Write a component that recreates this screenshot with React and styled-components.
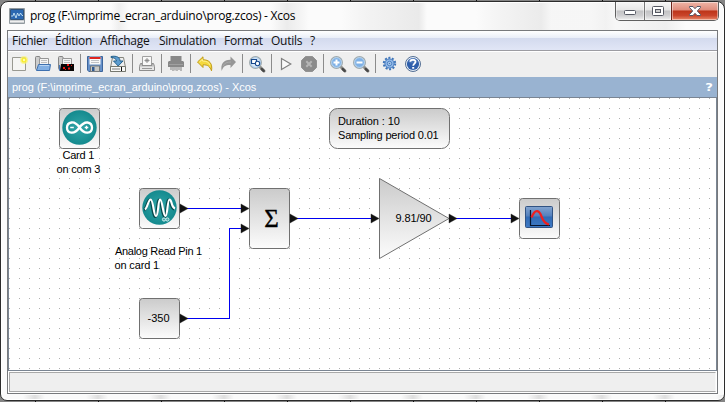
import React from "react";
import styled, { createGlobalStyle } from "styled-components";

const GlobalStyle = createGlobalStyle`
  * { box-sizing: border-box; }
  body { margin: 0; overflow: hidden; background: #77787a; }
`;

const Desktop = styled.div`
  width: 725px;
  height: 402px;
  padding: 1px 0 0;
  background:
    repeating-linear-gradient(90deg, transparent 0 35px, #111 35px 36px, transparent 36px 63px),
    #858585;
`;

const Window = styled.div`
  width: 725px;
  height: 400px;
  display: flex;
  flex-direction: column;
  padding: 0 7px 7px 7px;
  border: 1px solid #2c2c2c;
  border-radius: 8px 8px 7px 7px;
  background:
    linear-gradient(90deg, transparent 0 110px, #e9e9e9aa 118px, transparent 128px 270px, #e4e4e4aa 286px, #f1f1f1aa 300px, transparent 308px 340px, #efefefaa 365px, #e1e1e1aa 418px, transparent 426px 475px, #efefef88 495px, #e3e3e3aa 540px, #f2f2f288 550px 590px, #e9e9e988 605px, #f4f4f488 615px, #e9e9e9aa 665px, transparent 685px) 0 0 / 100% 30px no-repeat,
    repeating-linear-gradient(90deg, #fafafa 0 22px, #dedede 34px, #fafafa 44px 63px) 0 393px / 100% 5px no-repeat,
    #fbfbfb;
  box-shadow: inset 0 0 0 1px #fff;
`;

const TitleBar = styled.div`
  height: 28px;
  flex: none;
  display: flex;
  align-items: flex-start;
  padding-left: 1px;
`;

const AppIcon = styled.svg`
  width: 16px;
  height: 16px;
  margin-top: 6px;
`;

const TitleText = styled.div`
  flex: 1;
  margin: 5px 0 0 5px;
  font: 12px/18px "Open Sans", sans-serif;
  letter-spacing: ${(p) => p.$track}px;
  color: #000;
  white-space: pre;
`;

const WindowButtons = styled.div`
  display: flex;
  height: 19px;
  margin-right: -2px;
  border: 1px solid #606060;
  border-top: 0;
  border-radius: 0 0 5px 5px;
  overflow: hidden;
`;

const WindowButton = styled.div`
  width: ${(p) => p.$w}px;
  display: flex;
  align-items: center;
  justify-content: center;
  border-left: ${(p) => (p.$first ? 0 : 1)}px solid ${(p) => (p.$close ? "#6d241a" : "#777")};
  background: ${(p) =>
    p.$close
      ? "linear-gradient(#efb5a7 0, #e08d7d 44%, #bd3419 50%, #c9442a 75%, #e98a6b 100%)"
      : "linear-gradient(#f6f6f6 0, #e6e6e6 44%, #c3c3c5 50%, #cfcfd1 75%, #efefef 100%)"};
  box-shadow: inset 0 0 0 1px #ffffff70;
`;

const Client = styled.div`
  flex: 1;
  display: flex;
  flex-direction: column;
  width: 711px;
  margin-left: -1px;
  border: 1px solid #77797c;
  background: #fff;
`;

const MenuBar = styled.div`
  height: 20px;
  flex: none;
  display: flex;
  padding-left: 4px;
  background: linear-gradient(#fff 0, #e9eef8 7px, #d3daee 7px, #e1e6f6 19px);
  border-bottom: 1px solid #9c9ca2;
`;

const MenuItem = styled.div`
  width: ${(p) => p.$w}px;
  font: 12px/19px "Open Sans", sans-serif;
  letter-spacing: ${(p) => p.$track || 0}px;
  color: #111;
  white-space: nowrap;
`;

const ToolBar = styled.div`
  height: 27px;
  flex: none;
  display: flex;
  align-items: center;
  gap: 7px;
  padding: 0 0 3px 4px;
  border-top: 1px solid #fff;
  background: #efefef;
`;

const ToolIcon = styled.svg`
  width: 16px;
  height: 16px;
  flex: none;
  overflow: visible;
`;

const Separator = styled.div`
  width: 1px;
  height: 19px;
  margin: 0 -1px;
  background: #8b8b8b;
`;

const DockTitle = styled.div`
  height: 20px;
  flex: none;
  display: flex;
  justify-content: space-between;
  padding: 0 5px 0 4px;
  margin-top: -1px;
  background: #99b3d1;
  color: #fff;
  font: 11px/21px "Liberation Sans", sans-serif;
  letter-spacing: ${(p) => p.$track}px;
`;

const DockHelp = styled.b`
  font: bold 11px/21px "DejaVu Sans", sans-serif;
  transform: scaleX(1.2);
`;

const Canvas = styled.div`
  position: relative;
  flex: 1;
  border: 1px solid #7a8593;
  background: #fff;
  overflow: hidden;
`;

const Sheet = styled.svg`
  display: block;
  width: 707px;
  height: 272px;
`;

const CanvasText = styled.text`
  font: 11px "Liberation Sans", sans-serif;
  letter-spacing: ${(p) => p.$track || 0}px;
  fill: #000;
`;

const Sigma = styled.text`
  font: 25px "Liberation Serif", serif;
  fill: #000;
  stroke: #000;
  stroke-width: 0.3px;
`;

const StatusBar = styled.div`
  height: 22px;
  flex: none;
  padding: 1px 1px 0 1px;
  background: #fff;
`;

const StatusField = styled.div`
  height: 20px;
  border: 1px solid #a9a9a9;
  border-right-color: #f8f8f8;
  background: #efefef;
`;

const Magnifier = ({ children }) => (
  <ToolIcon viewBox="0 0 16 16">
    <path d="M10.5 10.5L15 15" stroke="#8b8b88" strokeWidth="3" strokeLinecap="round" />
    <path d="M12.8 13.1l1.8 1.8" stroke="#484848" strokeWidth="2.6" strokeLinecap="round" />
    <circle cx="6.5" cy="6.5" r="5.9" fill="#7fb1e6" stroke="#a3acae" strokeWidth="1.2" />
    <circle cx="6.5" cy="6.5" r="4.9" fill="none" stroke="#cce0f1" strokeWidth=".8" />
    {children}
  </ToolIcon>
);

const FolderBack = () => (
  <>
    <path d="M.5 1.5q0-1 1-1h3l1 2h3v11h-7q-1 0-1-1z" fill="#cdcdcd" stroke="#858585" />
    <path d="M4.5 2.5h9v10h-9z" fill="#f4f4f4" stroke="#969696" />
    <path d="M6 4.5h6M6 6.5h6" stroke="#bebebe" />
  </>
);

const tools = [
  <ToolIcon viewBox="0 0 16 16">
    <path d="M.5 1.5h13v13H.5z" fill="#f5f5f4" stroke="#999992" />
    <circle cx="12" cy="4" r="4" fill="#faf47c" opacity=".75" />
    <circle cx="12" cy="4" r="2.6" fill="#f8eb2d" />
    <circle cx="12" cy="4" r="1.2" fill="#fffcae" />
  </ToolIcon>,
  <ToolIcon viewBox="0 0 16 16">
    <FolderBack />
    <path d="M3.5 8.5h12l-1 6h-13z" fill="#82afe3" stroke="#3e70af" />
    <path d="M4.5 9.5h9.5" stroke="#b8d4f2" />
  </ToolIcon>,
  <ToolIcon viewBox="0 0 16 16">
    <FolderBack />
    <path d="M1.5 9v5.5h2" fill="#648cc0" stroke="#4776b7" />
    <path d="M3 8h13v7H2z" fill="#080505" />
    <path d="M9 8h2v2H9zM5 11h2v2H5zM10 11.5h2v2h-2zM13 9h1v1h-1zM7 13h1v1H7z" fill="#f01510" />
  </ToolIcon>,
  null,
  <ToolIcon viewBox="0 0 16 16">
    <path d="M.5.5h15v15H1.8L.5 14z" fill="#6590c8" stroke="#3c659c" />
    <path d="M2.5.5h11v8h-11z" fill="#f8f8f8" />
    <path d="M2.5 2h11" stroke="#df241d" strokeWidth="2" />
    <path d="M4 4.5h8M4 6.5h8" stroke="#c0c2c5" />
    <path d="M3.5 10h9v5.5h-9z" fill="#c8c8c4" stroke="#767a7c" />
    <path d="M5 11h2.5v4H5z" fill="#315b92" />
  </ToolIcon>,
  <ToolIcon viewBox="0 0 16 16">
    <path d="M2.5 1.5h11l2 10v4H.5v-4z" fill="#eee" stroke="#85857d" />
    <path d="M.5 10.5h15v5H.5z" fill="#f8f8f6" stroke="#76786f" />
    <path d="M2 13h8" stroke="#bababa" strokeWidth="2" />
    <path d="M11.5 11v4" stroke="#111" />
    <path d="M1 .5c6-1 9 1 9 4.5h3L8.2 10 3.5 5h3C6.5 3 4 1.5 1 1.5z" fill="#5d9ccf" stroke="#27638e" />
  </ToolIcon>,
  null,
  <ToolIcon viewBox="0 0 16 16">
    <path d="M3.5.5h9v9h-9z" fill="#f8f8f8" stroke="#a1a1a1" />
    <path d="M8 2v5M5.5 4.5h5M6.5 3l3 3m0-3l-3 3" stroke="#888" strokeWidth=".9" />
    <path d="M3 7.500H1.500l-1 3v4h15v-4l-1-3H13v2H3z" fill="#d0d0d0" stroke="#8d8d8d" />
    <path d="M1 11h14v3H1z" fill="#e6e6e6" />
    <path d="M3 12.500h10" stroke="#999" />
  </ToolIcon>,
  null,
  <ToolIcon viewBox="0 0 16 16">
    <path d="M2.500 0h11v5H15l1 1v5H0V6l1-1h1.500z" fill="#888" />
    <path d="M1 8.500h14" stroke="#a0a0a0" />
    <path d="M3 11v3m2-3v4m2-4v3.500m2-3.500v4m2-4v3m2-3v4" stroke="#929292" strokeWidth="1.200" />
  </ToolIcon>,
  null,
  <ToolIcon viewBox="0 0 16 16">
    <path d="M.5 6L6 .8v3c6-.2 9.800 3.500 8.500 11C12.800 10.500 11 8.700 6 8.800v2.700z" fill="#f4d83d" stroke="#c19c16" strokeLinejoin="round" />
    <path d="M2.500 6L5.500 3.300v1.700c4 0 6.500 1.500 7.500 4" fill="none" stroke="#fff18f" />
  </ToolIcon>,
  <ToolIcon viewBox="0 0 16 16">
    <path d="M16 6L10.500.5v3.200C4 3.500.2 7.500 1.700 15c1.500-4.500 3.800-6 8.800-5.900V12z" fill="#969696" />
    <path d="M3 10c1.500-3 4-4 8-4" fill="none" stroke="#aaa" />
  </ToolIcon>,
  null,
  <Magnifier>
    <circle cx="6.500" cy="6.500" r="4.500" fill="#d9e8f8" />
    <path d="M2.500 3.500h5v4h-5z" fill="#fff" stroke="#17498d" strokeWidth="1.200" />
    <circle cx="8.500" cy="7.500" r="2.200" fill="#fff" stroke="#17498d" strokeWidth="1.100" />
  </Magnifier>,
  null,
  <ToolIcon viewBox="0 0 16 16">
    <path d="M3.500 2.500v11L12.800 8z" fill="#fafafa" stroke="#818181" strokeWidth="1.200" />
  </ToolIcon>,
  <ToolIcon viewBox="0 0 16 16">
    <path d="M4.500.5h7l4 4v7l-4 4h-7l-4-4v-7z" fill="#8c8c8c" stroke="#939393" />
    <path d="M5.300 5.300l5.400 5.400m0-5.400l-5.400 5.400" stroke="#b6b6b6" strokeWidth="2" />
  </ToolIcon>,
  null,
  <Magnifier>
    <path d="M6.500 3.500v6M3.500 6.500h6" stroke="#fff" strokeWidth="2" />
  </Magnifier>,
  <Magnifier>
    <path d="M3.500 6.500h6" stroke="#fff" strokeWidth="2" />
  </Magnifier>,
  null,
  <ToolIcon viewBox="0 0 16 16">
    <circle cx="7.500" cy="7.500" r="5.700" fill="none" stroke="#3e75b9" strokeWidth="2" strokeDasharray="2 1.580" />
    <circle cx="7.500" cy="7.500" r="4.600" fill="#8fb7e8" stroke="#4379bd" />
    <circle cx="7.500" cy="7.500" r="2.200" fill="#b5d2f3" stroke="#4b80c0" />
    <circle cx="7.500" cy="7.500" r=".8" fill="#4377b8" />
  </ToolIcon>,
  <ToolIcon viewBox="0 0 16 16">
    <circle cx="8" cy="8" r="7.500" fill="#e6eef7" stroke="#546f94" />
    <circle cx="8" cy="8" r="6.100" fill="#2e5eab" />
    <path d="M3 6a5.500 5.500 0 0110 0q-5 3-10 0" fill="#6189c6" opacity=".5" />
    <path d="M5.300 5.700C5.500 3.200 10.500 3 10.500 5.800c0 1.800-2.300 1.800-2.300 4" fill="none" stroke="#fff" strokeWidth="1.800" />
    <path d="M7.200 11h2v1.700h-2z" fill="#fff" />
  </ToolIcon>,
];

const menus = [
  ["Fichier", 43],
  ["Édition", 45],
  ["Affichage", 59],
  ["Simulation", 65],
  ["Format", 47],
  ["Outils", 39],
  ["?", 12],
];

const Block = ({ x, y, w = 40, h = 40, r = 3 }) => (
  <rect x={x + 0.5} y={y + 0.5} width={w} height={h} rx={r} fill="url(#blockFill)" stroke="#707070" />
);

const Port = ({ x, y }) => <path d={`M${x} ${y - 4}v9l8-4.500z`} fill="#111" stroke="#222" strokeWidth=".4" />;

const WAVE =
  "M136 111.500C138.500 110 139.500 101.500 141.500 101.500C144.500 101.500 144.500 118 147 118C149.500 118 149 101.500 151 101.500C153.500 101.500 154 118 156.500 118C158.500 118 158.500 101.500 160.500 101.500C163 101.500 162 109 166 110.500";

const Diagram = () => (
  <Sheet viewBox="0 0 707 272">
    <defs>
      <linearGradient id="blockFill" x1="0" y1="0" x2="0" y2="1">
        <stop offset="0" stopColor="#cbcbcb" />
        <stop offset="1" stopColor="#fcfcfc" />
      </linearGradient>
      <radialGradient id="teal">
        <stop offset="0" stopColor="#32a7a9" />
        <stop offset="1" stopColor="#148a8e" />
      </radialGradient>
      <linearGradient id="screen" x1="0" y1="0" x2="0" y2="1">
        <stop offset="0" stopColor="#83a4cf" />
        <stop offset=".45" stopColor="#5480bd" />
        <stop offset=".5" stopColor="#326bb5" />
        <stop offset="1" stopColor="#3e79c4" />
      </linearGradient>
      <pattern id="grid" width="10" height="10" patternUnits="userSpaceOnUse">
        <rect width="1" height="1" fill="#b0b0b0" />
      </pattern>
    </defs>
    <rect width="707" height="272" fill="url(#grid)" />

    <g fill="none" stroke="#0000f0" shapeRendering="crispEdges">
      <path d="M177 110.500H234" />
      <path d="M177 220.500H220.500V130.500H234" />
      <path d="M287 120.500H364" />
      <path d="M447 120.500H504" />
    </g>

    <Block x={50} y={10} />
    <circle cx="70.500" cy="29.500" r="17.200" fill="url(#teal)" />
    <g fill="none" stroke="#fff" strokeWidth="2.300">
      <path d="M70.500 29.500C67 24.500 64 24.300 62.500 24.500C56.500 25.500 56.500 34 62.500 34.700C66 35 68 33 70.500 29.500C73 26 75 24.200 78.500 24.500C84.500 25.500 84.500 34 78.500 34.700C75 35 73 33 70.500 29.500Z" />
      <path d="M61.200 29.500h3.600M75.700 29.500h3.600M77.500 27.700v3.600" strokeWidth="1.300" />
    </g>
    <CanvasText x="53.500" y="61" $track={-0.25}>Card 1</CanvasText>
    <CanvasText x="47.500" y="75" $track={-0.2}>on com 3</CanvasText>

    <Block x={130} y={90} />
    <circle cx="150.500" cy="109.500" r="17.200" fill="url(#teal)" />
    <path d={WAVE} fill="none" stroke="#08494b" strokeWidth="3" transform="translate(-.8 .6)" />
    <path d={WAVE} fill="none" stroke="#fff" strokeWidth="2.100" />
    <g fill="#42a9aa" stroke="#d5efef" strokeWidth="1">
      <circle cx="155" cy="121.500" r="1.600" />
      <circle cx="158.400" cy="121.500" r="1.600" />
    </g>
    <CanvasText x="106" y="157" $track={-0.29}>Analog Read Pin 1</CanvasText>
    <CanvasText x="105.500" y="171" $track={-0.15}>on card 1</CanvasText>

    <Block x={130} y={200} />
    <CanvasText x="138.500" y="224">-350</CanvasText>

    <Block x={240} y={90} h={60} />
    <Sigma x="255.300" y="129">Σ</Sigma>

    <Block x={320} y={10} w={120} r={8} />
    <CanvasText x="329" y="27" $track={-0.1}>Duration : 10</CanvasText>
    <CanvasText x="329" y="41" $track={-0.17}>Sampling period 0.01</CanvasText>

    <path d="M370.500 80.500V160.500L440 120.500Z" fill="url(#blockFill)" stroke="#707070" />
    <CanvasText x="386.500" y="124" $track={-0.1}>9.81/90</CanvasText>

    <Block x={510} y={100} />
    <rect x="516.500" y="108.500" width="27" height="21" rx="1" fill="url(#screen)" stroke="#315383" />
    <path d="M521.500 112v15.500H541" fill="none" stroke="#07152e" strokeWidth="1.200" />
    <path d="M522.500 119.500C526.500 109.500 530.500 113 532.500 118.500C534.500 124 537 126 540 126.500" fill="none" stroke="#ee201f" strokeWidth="2.200" />

    <Port x={171} y={110} />
    <Port x={171} y={220} />
    <Port x={232} y={110} />
    <Port x={232} y={130} />
    <Port x={281} y={120} />
    <Port x={362} y={120} />
    <Port x={440} y={120} />
    <Port x={502} y={120} />
  </Sheet>
);

export default function App() {
  return (
    <>
      <GlobalStyle />
      <Desktop>
        <Window>
          <TitleBar>
            <AppIcon viewBox="0 0 16 16">
              <path d="M.5.5h15v15H.5z" fill="#c7cbce" stroke="#929a9f" />
              <path d="M1.500 1.500h13v10h-13z" fill="#2b68b1" stroke="#32547a" />
              <path d="M2 8h2l1-3 2 5 1.500-5 1.500 3L11.500 5 13 7.500h1" fill="none" stroke="#d9f1fa" strokeWidth=".8" />
              <path d="M1 13.500h14" stroke="#efefef" />
            </AppIcon>
            <TitleText $track={-0.235}>prog (F:\imprime_ecran_arduino\prog.zcos) - Xcos</TitleText>
            <WindowButtons>
              <WindowButton $w={28} $first>
                <svg width="13" height="7" viewBox="0 0 13 7">
                  <rect x=".5" y="2.500" width="11" height="4" rx="1" fill="#fff" stroke="#555862" />
                </svg>
              </WindowButton>
              <WindowButton $w={27}>
                <svg width="12" height="10" viewBox="0 0 12 10">
                  <rect x=".5" y=".5" width="11" height="9" rx="1" fill="#fff" stroke="#555862" />
                  <rect x="3.500" y="3.500" width="5" height="3" fill="#ccc" stroke="#555862" />
                </svg>
              </WindowButton>
              <WindowButton $w={47} $close>
                <svg width="12" height="10" viewBox="0 0 12 10">
                  <path d="M.5.5h3.500l2 2.200L8 .5h3.500v1L8.300 5l3.200 3.500v1H8L6 7.300 4 9.500H.5v-1L3.700 5 .5 1.500z" fill="#fff" stroke="#535666" />
                </svg>
              </WindowButton>
            </WindowButtons>
          </TitleBar>
          <Client>
            <MenuBar>
              {menus.map(([label, w]) => (
                <MenuItem key={label} $w={w} $track={-0.25}>
                  {label}
                </MenuItem>
              ))}
            </MenuBar>
            <ToolBar>
              {tools.map((icon, i) =>
                icon ? <React.Fragment key={i}>{icon}</React.Fragment> : <Separator key={i} />
              )}
            </ToolBar>
            <DockTitle $track={-0.03}>
              <span>prog (F:\imprime_ecran_arduino\prog.zcos) - Xcos</span>
              <DockHelp>?</DockHelp>
            </DockTitle>
            <Canvas>
              <Diagram />
            </Canvas>
            <StatusBar>
              <StatusField />
            </StatusBar>
          </Client>
        </Window>
      </Desktop>
    </>
  );
}
